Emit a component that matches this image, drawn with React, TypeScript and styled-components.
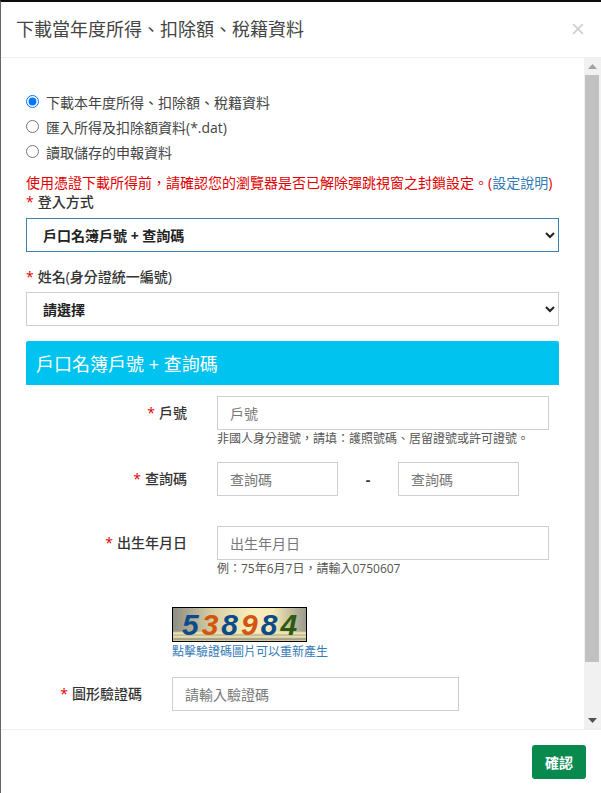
import React from "react";
import styled, { createGlobalStyle } from "styled-components";

const Global = createGlobalStyle`
  html, body { margin: 0; padding: 0; background: #fff; overflow: hidden; }
  * { box-sizing: border-box; }
  body { font-family: "Open Sans", "Noto Sans CJK TC", sans-serif; color: #444; }
`;

const FONT = `"Open Sans", "Noto Sans CJK TC", sans-serif`;

const Modal = styled.div`
  width: 601px;
  height: 793px;
  display: flex;
  flex-direction: column;
  background: #fff;
  border-top: 2px solid #0c0c0c;
  border-left: 1px solid #666;
`;

const Header = styled.header`
  height: 56px;
  flex: none;
  display: flex;
  align-items: center;
  justify-content: space-between;
  padding: 1px 17px 0 15px;
  border-bottom: 1px solid #eeeeee;
`;

const Title = styled.h4`
  margin: 0;
  font: 400 18px/1.4 ${FONT};
  color: #444;
`;

const Close = styled.button`
  border: 0;
  background: none;
  padding: 0 0 3px;
  display: flex;
  color: #d0d0d0;
`;

const Middle = styled.div`
  flex: 1;
  min-height: 0;
  display: flex;
`;

const Content = styled.main`
  flex: 1;
  min-width: 0;
  overflow: hidden;
  padding: 31px 25px 0 25px;
`;

const Track = styled.aside`
  width: 17px;
  flex: none;
  display: flex;
  flex-direction: column;
  background: #f1f1f1;
`;

const ArrowBox = styled.div`
  height: 17px;
  flex: none;
  display: flex;
  align-items: center;
  justify-content: center;
`;

const Thumb = styled.div`
  height: 587px;
  flex: none;
  margin: 0 2px 0 1px;
  background: #c1c1c1;
`;

const TrackSpace = styled.div`
  flex: 1;
`;

const RadioRow = styled.label`
  display: flex;
  align-items: center;
  height: 25px;
  font-size: 14px;
  color: #444;
`;

const Radio = styled.input`
  width: 13px;
  height: 13px;
  margin: 0 7px 0 0;
  flex: none;
`;

const Warning = styled.p`
  margin: 9px 0 0;
  font-size: 14px;
  line-height: 19px;
  color: #e00000;
  white-space: nowrap;
`;

const HelpLink = styled.a`
  color: #337ab7;
  text-decoration: none;
`;

const FieldLabel = styled.label`
  display: block;
  font-size: 14px;
  line-height: 20px;
  font-weight: 500;
  color: #333;
`;

const TopLabel = styled(FieldLabel)<{ $gap: number; $below: number }>`
  margin-top: ${(p) => p.$gap}px;
  margin-bottom: ${(p) => p.$below}px;
`;

const Star = styled.span`
  color: #e00000;
  margin-right: 4px;
`;

const Select = styled.select<{ $focus?: boolean }>`
  display: block;
  width: 533px;
  height: 34px;
  padding: 0 12px;
  background: #fff;
  font: 700 14px ${FONT};
  color: #222;
  border: 1px solid ${(p) => (p.$focus ? "#3c82ad" : "#cfcfcf")};
  border-radius: 0;
  outline: none;
`;

const Banner = styled.div`
  width: 533px;
  height: 44px;
  margin-top: 15px;
  padding: 0 10px;
  display: flex;
  align-items: center;
  background: #00c3f0;
  border-radius: 2px 2px 0 0;
  color: #fff;
  font-size: 18px;
`;

const Row = styled.div<{ $top: number }>`
  display: flex;
  align-items: flex-start;
  margin-top: ${(p) => p.$top}px;
`;

const RowLabel = styled(FieldLabel)<{ $width: number }>`
  width: ${(p) => p.$width}px;
  flex: none;
  text-align: right;
  padding-top: 7px;
`;

const Field = styled.div<{ $left: number }>`
  margin-left: ${(p) => p.$left}px;
  display: flex;
  flex-direction: column;
`;

const Input = styled.input<{ $width: number }>`
  width: ${(p) => p.$width}px;
  height: 34px;
  padding: 0 12px;
  font: 400 14px ${FONT};
  color: #444;
  border: 1px solid #cfcfcf;
  border-radius: 0;
  outline: none;
  &::placeholder { color: #777; opacity: 1; }
`;

const Pair = styled.div`
  display: flex;
  align-items: center;
`;

const Dash = styled.span`
  width: 60px;
  text-align: center;
  font-weight: 700;
  font-size: 14px;
  color: #333;
`;

const Help = styled.small`
  font-size: 12px;
  line-height: 17px;
  color: #555;
  white-space: nowrap;
`;

const CaptchaBlock = styled.div`
  margin: 30px 0 0 146px;
  display: flex;
  flex-direction: column;
  align-items: flex-start;
`;

const Captcha = styled.div`
  width: 135px;
  height: 35px;
  border: 1px solid #000;
  display: flex;
  align-items: center;
  justify-content: center;
  gap: 3px;
  padding-top: 1px;
  background:
    linear-gradient(180deg, transparent 70%, #f8ecb4 76%, #b9b39a 82%, #f4e7ad 88%, #8e8e80 94%, #e9dda8 100%),
    linear-gradient(90deg, #8d8d84 0%, #d8cfa6 30%, #f8eebd 60%, #f5e9b6 75%, #9a9a8e 100%);
`;

const Digit = styled.span<{ $color: string }>`
  font: italic 700 30px/1 "Liberation Sans", sans-serif;
  color: ${(p) => p.$color};
`;

const CaptchaHint = styled.a`
  margin-top: 1px;
  font-size: 12px;
  line-height: 17px;
  color: #337ab7;
  text-decoration: none;
`;

const Footer = styled.footer`
  height: 64px;
  flex: none;
  display: flex;
  justify-content: flex-end;
  align-items: flex-start;
  padding: 15px 15px 0 0;
  border-top: 1px solid #eeeeee;
`;

const Confirm = styled.button`
  width: 54px;
  height: 34px;
  border: 0;
  border-radius: 3px;
  background: #088a4f;
  color: #fff;
  font: 700 14px ${FONT};
`;

const digits: [string, string][] = [
  ["5", "#0d4a8a"],
  ["3", "#d2560f"],
  ["8", "#0d4a8a"],
  ["9", "#d2560f"],
  ["8", "#0d4a8a"],
  ["4", "#2c5a12"],
];

export default function App() {
  return (
    <>
      <Global />
      <Modal>
        <Header>
          <Title>下載當年度所得、扣除額、稅籍資料</Title>
          <Close aria-label="close">
            <svg width="12" height="12" viewBox="0 0 12 12">
              <path d="M1.2 1.2 L10.8 10.8 M10.8 1.2 L1.2 10.8" stroke="currentColor" strokeWidth="1.8" />
            </svg>
          </Close>
        </Header>
        <Middle>
          <Content>
            <RadioRow>
              <Radio type="radio" name="m" defaultChecked />
              下載本年度所得、扣除額、稅籍資料
            </RadioRow>
            <RadioRow>
              <Radio type="radio" name="m" />
              匯入所得及扣除額資料(*.dat)
            </RadioRow>
            <RadioRow>
              <Radio type="radio" name="m" />
              讀取儲存的申報資料
            </RadioRow>
            <Warning>
              使用憑證下載所得前，請確認您的瀏覽器是否已解除彈跳視窗之封鎖設定。(<HelpLink>設定說明</HelpLink>)
            </Warning>
            <TopLabel $gap={0} $below={6}>
              <Star>*</Star>登入方式
            </TopLabel>
            <Select $focus defaultValue="a">
              <option value="a">戶口名簿戶號 + 查詢碼</option>
            </Select>
            <TopLabel $gap={15} $below={5}>
              <Star>*</Star>姓名(身分證統一編號)
            </TopLabel>
            <Select defaultValue="a">
              <option value="a">請選擇</option>
            </Select>
            <Banner>戶口名簿戶號 + 查詢碼</Banner>
            <Row $top={11}>
              <RowLabel $width={161}>
                <Star>*</Star>戶號
              </RowLabel>
              <Field $left={30}>
                <Input $width={332} placeholder="戶號" />
                <Help>非國人身分證號，請填：護照號碼、居留證號或許可證號。</Help>
              </Field>
            </Row>
            <Row $top={15}>
              <RowLabel $width={161}>
                <Star>*</Star>查詢碼
              </RowLabel>
              <Field $left={30}>
                <Pair>
                  <Input $width={121} placeholder="查詢碼" />
                  <Dash>-</Dash>
                  <Input $width={121} placeholder="查詢碼" />
                </Pair>
              </Field>
            </Row>
            <Row $top={30}>
              <RowLabel $width={161}>
                <Star>*</Star>出生年月日
              </RowLabel>
              <Field $left={30}>
                <Input $width={332} placeholder="出生年月日" />
                <Help>例：75年6月7日，請輸入0750607</Help>
              </Field>
            </Row>
            <CaptchaBlock>
              <Captcha>
                {digits.map(([d, c], i) => (
                  <Digit key={i} $color={c}>
                    {d}
                  </Digit>
                ))}
              </Captcha>
              <CaptchaHint>點擊驗證碼圖片可以重新產生</CaptchaHint>
            </CaptchaBlock>
            <Row $top={17}>
              <RowLabel $width={116}>
                <Star>*</Star>圖形驗證碼
              </RowLabel>
              <Field $left={30}>
                <Input $width={287} placeholder="請輸入驗證碼" />
              </Field>
            </Row>
          </Content>
          <Track>
            <ArrowBox>
              <svg width="9" height="5" viewBox="0 0 9 5">
                <path d="M4.5 0 L9 5 L0 5 Z" fill="#a3a3a3" />
              </svg>
            </ArrowBox>
            <Thumb />
            <TrackSpace />
            <ArrowBox>
              <svg width="9" height="5" viewBox="0 0 9 5">
                <path d="M0 0 L9 0 L4.5 5 Z" fill="#505050" />
              </svg>
            </ArrowBox>
          </Track>
        </Middle>
        <Footer>
          <Confirm>確認</Confirm>
        </Footer>
      </Modal>
    </>
  );
}
